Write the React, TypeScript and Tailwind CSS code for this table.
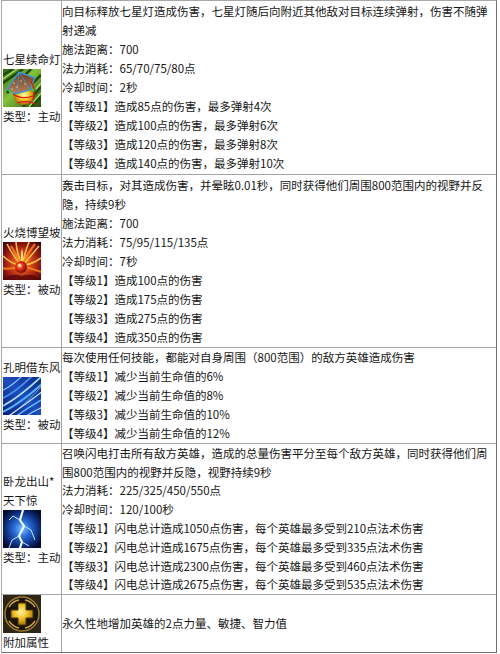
import type { ReactNode } from 'react';

function LanternIcon() {
  return (
    <svg width="38" height="38" viewBox="0 0 38 38" className="block">
      <defs>
        <linearGradient id="lnBg" x1="0" y1="0" x2="1" y2="1">
          <stop offset="0" stopColor="#2f6a16" />
          <stop offset="0.45" stopColor="#86c23a" />
          <stop offset="1" stopColor="#23500f" />
        </linearGradient>
        <radialGradient id="lnGlow" cx="0.5" cy="0.45" r="0.55">
          <stop offset="0" stopColor="#fffbc0" />
          <stop offset="0.45" stopColor="#f4cf2a" />
          <stop offset="1" stopColor="#b0600c" />
        </radialGradient>
        <linearGradient id="lnRoof" x1="0" y1="0" x2="0" y2="1">
          <stop offset="0" stopColor="#6b3d22" />
          <stop offset="1" stopColor="#b98258" />
        </linearGradient>
      </defs>
      <rect width="38" height="38" fill="url(#lnBg)" />
      <path d="M0 6 L10 0 M0 14 L20 0 M4 24 L28 0 M20 38 L38 18 M28 38 L38 28 M30 14 L38 6" stroke="#1d4a0c" strokeWidth="2.5" />
      <path d="M0 10 L14 0 M26 38 L38 24 M33 20 L38 14" stroke="#b8e26a" strokeWidth="1.2" />
      <ellipse cx="21" cy="27" rx="10" ry="9" fill="url(#lnGlow)" />
      <polygon points="4,20 16,3 32,9 27,21 12,25" fill="url(#lnRoof)" stroke="#3b9ad6" strokeWidth="1.4" />
      <path d="M16 3 L14 23 M16 3 L27 21" stroke="#3b9ad6" strokeWidth="0.9" fill="none" />
      <circle cx="11" cy="14" r="0.8" fill="#e9c9a0" />
      <circle cx="18" cy="12" r="0.8" fill="#e9c9a0" />
      <circle cx="22" cy="15" r="0.8" fill="#e9c9a0" />
      <circle cx="14" cy="18" r="0.8" fill="#e9c9a0" />
      <circle cx="9" cy="20" r="0.8" fill="#e9c9a0" />
      <path d="M10 25 Q18 31 30 27 M14 34 Q24 31 33 35 M28 12 Q33 20 30 31" stroke="#d51a14" strokeWidth="1.3" fill="none" />
      <circle cx="30" cy="21" r="1.6" fill="#4ac040" />
      <circle cx="7" cy="22" r="1.4" fill="#4ac040" />
    </svg>
  );
}

function FireIcon() {
  return (
    <svg width="38" height="38" viewBox="0 0 38 38" className="block">
      <defs>
        <radialGradient id="frBg" cx="0.5" cy="0.55" r="0.7">
          <stop offset="0" stopColor="#ffb020" />
          <stop offset="0.3" stopColor="#e0501a" />
          <stop offset="0.7" stopColor="#8c1410" />
          <stop offset="1" stopColor="#3a0606" />
        </radialGradient>
        <radialGradient id="frOrb" cx="0.4" cy="0.4" r="0.6">
          <stop offset="0" stopColor="#ffe0a0" />
          <stop offset="0.4" stopColor="#f03a10" />
          <stop offset="1" stopColor="#7a0a06" />
        </radialGradient>
      </defs>
      <rect width="38" height="38" fill="url(#frBg)" />
      <path d="M19 24 Q10 14 4 2 M19 24 Q14 12 13 0 M19 24 Q22 10 26 0 M19 24 Q28 14 36 4 M19 24 Q8 22 0 14 M19 24 Q30 22 38 16" stroke="#ffd050" strokeWidth="1.6" fill="none" opacity="0.9" />
      <path d="M19 24 Q12 10 8 4 M19 24 Q24 12 32 2 M19 24 Q5 28 0 26 M19 24 Q33 28 38 30" stroke="#ff8a20" strokeWidth="2.2" fill="none" opacity="0.8" />
      <path d="M19 24 Q17 14 19 6 Q21 14 19 24" fill="#fff2a0" opacity="0.9" />
      <path d="M0 38 Q8 30 19 34 Q30 30 38 38 Z" fill="#5a0808" opacity="0.8" />
      <circle cx="18" cy="25" r="6" fill="url(#frOrb)" />
      <circle cx="16.5" cy="23" r="1.6" fill="#fff0c0" opacity="0.8" />
    </svg>
  );
}

function WindIcon() {
  return (
    <svg width="38" height="38" viewBox="0 0 38 38" className="block">
      <defs>
        <linearGradient id="wdBg" x1="0" y1="1" x2="1" y2="0">
          <stop offset="0" stopColor="#0a1c7a" />
          <stop offset="0.5" stopColor="#1f4cc0" />
          <stop offset="1" stopColor="#102a88" />
        </linearGradient>
      </defs>
      <rect width="38" height="38" fill="url(#wdBg)" />
      <path d="M-2 30 Q14 22 40 -2" stroke="#8fdcff" strokeWidth="1.6" fill="none" />
      <path d="M-2 36 Q18 26 40 6" stroke="#4fb4f4" strokeWidth="2" fill="none" />
      <path d="M4 40 Q22 28 40 14" stroke="#b0ecff" strokeWidth="1.2" fill="none" />
      <path d="M-2 22 Q12 16 30 -2" stroke="#3f94e8" strokeWidth="1.8" fill="none" />
      <path d="M-2 14 Q8 10 20 -2" stroke="#7ccaff" strokeWidth="1.2" fill="none" />
      <path d="M12 40 Q26 30 40 22" stroke="#5abcff" strokeWidth="1.6" fill="none" />
      <path d="M22 40 Q30 34 40 30" stroke="#98e0ff" strokeWidth="1.2" fill="none" />
      <path d="M2 27 Q20 18 36 2" stroke="#ffffff" strokeWidth="0.7" fill="none" opacity="0.7" />
      <path d="M8 38 Q24 26 38 10" stroke="#e8faff" strokeWidth="0.7" fill="none" opacity="0.7" />
    </svg>
  );
}

function LightningIcon() {
  return (
    <svg width="38" height="38" viewBox="0 0 38 38" className="block">
      <defs>
        <radialGradient id="ltBg" cx="0.5" cy="0.5" r="0.6">
          <stop offset="0" stopColor="#7cc4ff" />
          <stop offset="0.35" stopColor="#2a6cd8" />
          <stop offset="0.75" stopColor="#0c2a78" />
          <stop offset="1" stopColor="#050c30" />
        </radialGradient>
      </defs>
      <rect width="38" height="38" fill="url(#ltBg)" />
      <path d="M20 0 L17 10 L21 16 L16 26 L19 32 L17 38" stroke="#e8f8ff" strokeWidth="2.2" fill="none" />
      <path d="M21 16 L28 20 L32 30 M16 26 L9 30 L6 38 M17 10 L10 6 L6 10 M19 32 L26 36" stroke="#bfe8ff" strokeWidth="1" fill="none" />
      <path d="M20 0 L17 10 L21 16 L16 26 L19 32 L17 38" stroke="#ffffff" strokeWidth="0.8" fill="none" />
    </svg>
  );
}

function AttrIcon() {
  return (
    <svg width="38" height="38" viewBox="0 0 38 38" className="block">
      <defs>
        <radialGradient id="atCross" cx="0.45" cy="0.4" r="0.6">
          <stop offset="0" stopColor="#fff4a8" />
          <stop offset="0.5" stopColor="#f0c428" />
          <stop offset="1" stopColor="#a87010" />
        </radialGradient>
      </defs>
      <rect width="38" height="38" fill="#2e2614" />
      <circle cx="19" cy="19" r="17" fill="#1a150b" stroke="#9a7a34" strokeWidth="1.5" />
      <path d="M6 12 Q10 6 16 5 M32 12 Q28 6 22 5 M6 26 Q10 32 16 33 M32 26 Q28 32 22 33" stroke="#c9a24a" strokeWidth="1.4" fill="none" />
      <path d="M15 8 H23 V15 H30 V23 H23 V30 H15 V23 H8 V15 H15 Z" fill="url(#atCross)" stroke="#4a3408" strokeWidth="1" />
    </svg>
  );
}

function Lines({ lines }: { lines: string[] }) {
  return (
    <>
      {lines.map((l, i) => (
        <div key={i} className="whitespace-nowrap">
          {l}
        </div>
      ))}
    </>
  );
}

function Row({
  h,
  first,
  left,
  children,
}: {
  h: string;
  first?: boolean;
  left: ReactNode;
  children: ReactNode;
}) {
  return (
    <div className={`flex ${h} ${first ? '' : 'border-t border-[#a3a3a3]'}`}>
      <div className="w-[60px] shrink-0 border-r border-[#a3a3a3] pl-px flex flex-col justify-center">
        {left}
      </div>
      <div className="flex-1 min-w-0 flex flex-col justify-center">{children}</div>
    </div>
  );
}

export default function App() {
  return (
    <div className="w-[500px] h-[654px] bg-white">
      <div className="ml-px w-[496px] border border-t-[#a8a8a8] border-l-[#a8a8a8] border-r-[#707070] border-b-[#707070] text-[11.5px] leading-[19px] text-[#161616] font-['Noto_Sans_CJK_SC',sans-serif]">
        <Row
          first
          h="h-[173px]"
          left={
            <>
              <div className="whitespace-nowrap">七星续命灯</div>
              <LanternIcon />
              <div className="whitespace-nowrap">类型：主动</div>
            </>
          }
        >
          <Lines
            lines={[
              '向目标释放七星灯造成伤害，七星灯随后向附近其他敌对目标连续弹射，伤害不随弹',
              '射递减',
              '施法距离：700',
              '法力消耗：65/70/75/80点',
              '冷却时间：2秒',
              '【等级1】造成85点的伤害，最多弹射4次',
              '【等级2】造成100点的伤害，最多弹射6次',
              '【等级3】造成120点的伤害，最多弹射8次',
              '【等级4】造成140点的伤害，最多弹射10次',
            ]}
          />
        </Row>
        <Row
          h="h-[173px]"
          left={
            <>
              <div className="whitespace-nowrap">火烧博望坡</div>
              <FireIcon />
              <div className="whitespace-nowrap">类型：被动</div>
            </>
          }
        >
          <Lines
            lines={[
              '轰击目标，对其造成伤害，并晕眩0.01秒，同时获得他们周围800范围内的视野并反',
              '隐，持续9秒',
              '施法距离：700',
              '法力消耗：75/95/115/135点',
              '冷却时间：7秒',
              '【等级1】造成100点的伤害',
              '【等级2】造成175点的伤害',
              '【等级3】造成275点的伤害',
              '【等级4】造成350点的伤害',
            ]}
          />
        </Row>
        <Row
          h="h-[96px]"
          left={
            <>
              <div className="whitespace-nowrap">孔明借东风</div>
              <WindIcon />
              <div className="whitespace-nowrap">类型：被动</div>
            </>
          }
        >
          <Lines
            lines={[
              '每次使用任何技能，都能对自身周围（800范围）的敌方英雄造成伤害',
              '【等级1】减少当前生命值的6%',
              '【等级2】减少当前生命值的8%',
              '【等级3】减少当前生命值的10%',
              '【等级4】减少当前生命值的12%',
            ]}
          />
        </Row>
        <Row
          h="h-[151px]"
          left={
            <>
              <div className="whitespace-nowrap">卧龙出山*</div>
              <div className="whitespace-nowrap">天下惊</div>
              <LightningIcon />
              <div className="whitespace-nowrap">类型：主动</div>
            </>
          }
        >
          <div className="leading-[18.8px]">
            <Lines
              lines={[
                '召唤闪电打击所有敌方英雄，造成的总量伤害平分至每个敌方英雄，同时获得他们周',
                '围800范围内的视野并反隐，视野持续9秒',
                '法力消耗：225/325/450/550点',
                '冷却时间：120/100秒',
                '【等级1】闪电总计造成1050点伤害，每个英雄最多受到210点法术伤害',
                '【等级2】闪电总计造成1675点伤害，每个英雄最多受到335点法术伤害',
                '【等级3】闪电总计造成2300点伤害，每个英雄最多受到460点法术伤害',
                '【等级4】闪电总计造成2675点伤害，每个英雄最多受到535点法术伤害',
              ]}
            />
          </div>
        </Row>
        <Row
          h="h-[58px]"
          left={
            <>
              <AttrIcon />
              <div className="whitespace-nowrap">附加属性</div>
            </>
          }
        >
          <div className="whitespace-nowrap">永久性地增加英雄的2点力量、敏捷、智力值</div>
        </Row>
      </div>
    </div>
  );
}
